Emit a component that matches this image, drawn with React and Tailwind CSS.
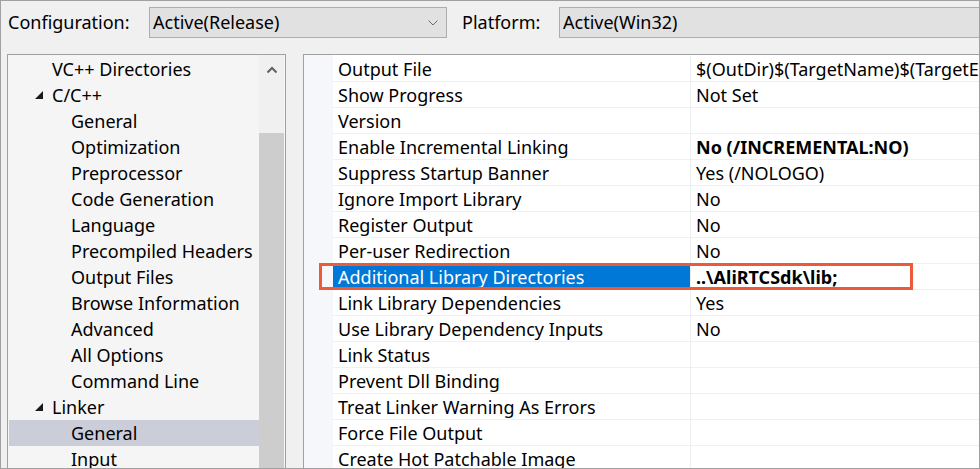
import React from "react";

const tree = [
  { t: "VC++ Directories", lvl: 1 },
  { t: "C/C++", lvl: 1, exp: true },
  { t: "General", lvl: 2 },
  { t: "Optimization", lvl: 2 },
  { t: "Preprocessor", lvl: 2 },
  { t: "Code Generation", lvl: 2 },
  { t: "Language", lvl: 2 },
  { t: "Precompiled Headers", lvl: 2 },
  { t: "Output Files", lvl: 2 },
  { t: "Browse Information", lvl: 2 },
  { t: "Advanced", lvl: 2 },
  { t: "All Options", lvl: 2 },
  { t: "Command Line", lvl: 2 },
  { t: "Linker", lvl: 1, exp: true },
  { t: "General", lvl: 2, sel: true },
  { t: "Input", lvl: 2 },
];

const props = [
  ["Output File", "$(OutDir)$(TargetName)$(TargetExt)"],
  ["Show Progress", "Not Set"],
  ["Version", ""],
  ["Enable Incremental Linking", "No (/INCREMENTAL:NO)", true],
  ["Suppress Startup Banner", "Yes (/NOLOGO)"],
  ["Ignore Import Library", "No"],
  ["Register Output", "No"],
  ["Per-user Redirection", "No"],
  ["Additional Library Directories", "..\\AliRTCSdk\\lib;", true, true],
  ["Link Library Dependencies", "Yes"],
  ["Use Library Dependency Inputs", "No"],
  ["Link Status", ""],
  ["Prevent Dll Binding", ""],
  ["Treat Linker Warning As Errors", ""],
  ["Force File Output", ""],
  ["Create Hot Patchable Image", ""],
];

function Tri() {
  return (
    <svg width="8" height="8" viewBox="0 0 8 8" className="shrink-0">
      <polygon points="8,0 8,8 0,8" fill="#1a1a1a" />
    </svg>
  );
}

export default function App() {
  return (
    <div
      className="w-[980px] h-[469px] bg-[#f0f0f0] border border-[#a0a0a0] overflow-hidden flex flex-col text-black"
      style={{ fontFamily: '"Noto Sans", "Open Sans", sans-serif' }}
    >
      {/* top bar */}
      <div className="h-[53px] flex items-start pt-[6px] shrink-0">
        <div className="ml-[7px] h-[31px] flex items-center text-[18px] w-[141px] shrink-0">Configuration:</div>
        <div className="h-[31px] w-[298px] shrink-0 bg-[#e1e1e1] border border-[#adadad] flex items-center pl-[3px] pr-[8px] text-[18px]">
          <span className="flex-1">Active(Release)</span>
          <svg width="10" height="6" viewBox="0 0 10 6">
            <polyline points="0.5,0.5 5,5 9.5,0.5" fill="none" stroke="#6d6d6d" strokeWidth="1" />
          </svg>
        </div>
        <div className="ml-[15px] h-[31px] w-[97px] shrink-0 flex items-center text-[18px]">Platform:</div>
        <div className="h-[31px] flex-1 bg-[#e1e1e1] border border-[#adadad] border-r-0 flex items-center pl-[3px] text-[18px]">
          Active(Win32)
        </div>
      </div>

      <div className="flex flex-1 min-h-0">
        {/* left tree */}
        <div className="ml-[6px] w-[279px] shrink-0 border border-[#a0a0a0] border-b-0 bg-[#f5f5f5] flex">
          <div className="flex-1 pt-px min-w-0">
            {tree.map((r, i) => (
              <div
                key={i}
                className={`h-[26px] ml-px flex items-center text-[18px] leading-none whitespace-nowrap ${r.sel ? "bg-[#cbcdd9]" : ""}`}
              >
                {r.lvl === 1 ? (
                  <div className="flex items-center">
                    <div className="w-[43px] flex justify-end pr-[9px]">{r.exp ? <Tri /> : null}</div>
                    <span>{r.t}</span>
                  </div>
                ) : (
                  <span className="pl-[62px]">{r.t}</span>
                )}
              </div>
            ))}
          </div>
          <div className="w-[25px] shrink-0 bg-[#f0f0f0] flex flex-col mr-px">
            <div className="h-[78px] flex justify-center pt-[11px]">
              <svg width="12" height="8" viewBox="0 0 12 8">
                <polyline points="1.5,6.5 6,2 10.5,6.5" fill="none" stroke="#606060" strokeWidth="2" />
              </svg>
            </div>
            <div className="flex-1 bg-[#cdcdcd]" />
          </div>
        </div>

        {/* right grid */}
        <div className="ml-[17px] flex-1 min-w-0 border-l border-t border-[#a0a0a0] bg-white flex relative">
          <div className="w-[29px] bg-[#f5f7fb] shrink-0" />
          <div className="flex-1 pt-px min-w-0">
            {props.map(([n, v, bold, sel], i) => (
              <div key={i} className="h-[26px] flex border-b border-[#f0f0f0] text-[18px] leading-none">
                <div
                  className={`w-[358px] shrink-0 flex items-center pl-[5px] border-r border-[#eceef2] whitespace-nowrap ${sel ? "bg-[#0078d7] text-white" : ""}`}
                >
                  {n}
                </div>
                <div className={`flex-1 min-w-0 flex items-center pl-[5px] whitespace-nowrap overflow-hidden ${bold ? "font-bold" : ""}`}>
                  {v}
                </div>
              </div>
            ))}
          </div>
          <div className="absolute left-[15px] top-[208px] w-[594px] h-[27px] border-[3px] border-[#ee5a37] pointer-events-none" />
        </div>
      </div>
    </div>
  );
}
